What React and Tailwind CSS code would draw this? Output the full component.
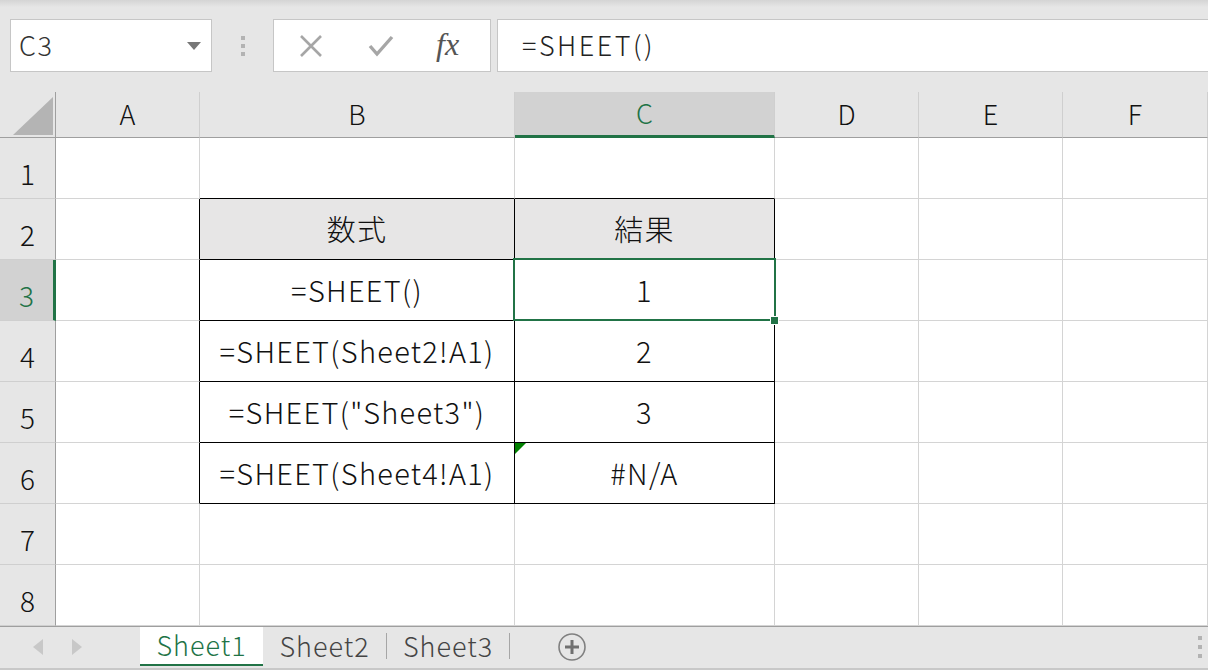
import React from 'react';

const cols = ['A', 'B', 'C', 'D', 'E', 'F'];

// table content, keyed by row number
const rows = {
    2: { B: '数式', C: '結果', head: true },
    3: { B: '=SHEET()', C: '1' },
    4: { B: '=SHEET(Sheet2!A1)', C: '2' },
    5: { B: '=SHEET("Sheet3")', C: '3' },
    6: { B: '=SHEET(Sheet4!A1)', C: '#N/A', error: true },
};

const inTable = (col, row) => (col === 'B' || col === 'C') && row >= 2 && row <= 6;

const Cell = ({ col, row }) => {
    const data = rows[row];
    const text = data && data[col];
    // right border is black if this cell or the one to the right is part of the table
    const rightBlack = inTable(col, row) || (col === 'A' && row >= 2 && row <= 6);
    const bottomBlack = inTable(col, row) || ((col === 'B' || col === 'C') && row === 1);
    const selected = col === 'C' && row === 3;

    return (
        <div
            className={`relative flex items-center justify-center border-r border-b text-[29px] font-light tracking-[1.3px] text-[#111] ${
                rightBlack ? 'border-r-black' : 'border-r-[#d4d4d4]'
            } ${bottomBlack ? 'border-b-black' : 'border-b-[#d4d4d4]'} ${
                data?.head && inTable(col, row) ? 'bg-[#e7e6e6]' : 'bg-white'
            }`}
        >
            {text && <span className="leading-none pb-[2px]">{text}</span>}
            {selected && (
                <>
                    <div className="absolute z-10 -top-[2px] -left-[2px] right-[-2px] bottom-[-1px] border-2 border-[#217346]"></div>
                    <div className="absolute z-10 -right-[5px] -bottom-[5px] w-[7px] h-[7px] bg-[#217346] border border-white box-content"></div>
                </>
            )}
            {data?.error && col === 'C' && (
                <svg className="absolute top-0 left-0" width="11" height="11" viewBox="0 0 11 11">
                    <polygon points="0,0 11,0 0,11" fill="#008000" />
                </svg>
            )}
        </div>
    );
};

const App = () => {
    return (
        <div
            className="w-[1208px] h-[670px] bg-[#e6e6e6] flex flex-col overflow-hidden"
            style={{ fontFamily: '"Noto Sans CJK JP", "Noto Sans", sans-serif' }}
        >
            {/* top edge of the ribbon */}
            <div className="h-[7px] bg-gradient-to-b from-[#d4d4d4] to-[#e6e6e6]"></div>

            {/* formula bar */}
            <div className="h-[85px] flex items-start pt-[12px] pl-[10px]">
                <div className="w-[202px] h-[53px] bg-white border border-[#c6c6c6] flex items-center justify-between pl-[8px] pr-[10px]">
                    <span className="text-[27px] font-light tracking-[1.5px] text-[#333]">C3</span>
                    <svg width="14" height="8" viewBox="0 0 14 8">
                        <polygon points="0,0 14,0 7,8" fill="#777" />
                    </svg>
                </div>
                <div className="w-[61px] h-[53px] flex flex-col items-center justify-center gap-[4px]">
                    <span className="w-[4px] h-[4px] bg-[#b3b3b3]"></span>
                    <span className="w-[4px] h-[4px] bg-[#b3b3b3]"></span>
                    <span className="w-[4px] h-[4px] bg-[#b3b3b3]"></span>
                </div>
                <div className="w-[218px] h-[53px] bg-white border border-[#c6c6c6] flex items-center">
                    <svg className="ml-[25px]" width="24" height="24" viewBox="0 0 24 24">
                        <path d="M2 2 L22 22 M22 2 L2 22" stroke="#a6a6a6" strokeWidth="2.6" fill="none" />
                    </svg>
                    <svg className="ml-[45px]" width="26" height="24" viewBox="0 0 26 24">
                        <path d="M2 12 L9 20 L24 3" stroke="#a6a6a6" strokeWidth="3.4" fill="none" />
                    </svg>
                    <span
                        className="ml-[42px] text-[32px] italic text-[#555] leading-none pb-[4px]"
                        style={{ fontFamily: '"Liberation Serif", serif' }}
                    >
                        fx
                    </span>
                </div>
                <div className="ml-[6px] flex-1 h-[53px] bg-white border border-[#c6c6c6] border-r-0 flex items-center pl-[24px]">
                    <span className="text-[27px] font-light tracking-[2.5px] text-[#222]">=SHEET()</span>
                </div>
            </div>

            {/* sheet grid */}
            <div className="grid grid-cols-[56px_144px_315px_260px_144px_144px_145px] grid-rows-[46px_repeat(8,61px)] border-r-2 border-dashed border-r-[#b0b0b0]">
                <div className="relative bg-[#e6e6e6] border-r border-b border-[#9f9f9f]">
                    <svg className="absolute left-[13px] top-[5px]" width="40" height="38" viewBox="0 0 40 38">
                        <polygon points="40,0 40,38 0,38" fill="#b4b4b4" />
                    </svg>
                </div>
                {cols.map((c) => (
                    <div
                        key={c}
                        className={`flex items-center justify-center text-[27px] font-light border-r border-r-[#cfcfcf] ${
                            c === 'C'
                                ? 'bg-[#d2d2d2] text-[#217346] border-b-[3px] border-b-[#217346]'
                                : 'bg-[#e6e6e6] text-[#111] border-b border-b-[#9f9f9f]'
                        }`}
                    >
                        {c}
                    </div>
                ))}
                {[1, 2, 3, 4, 5, 6, 7, 8].map((r) => (
                    <React.Fragment key={r}>
                        <div
                            className={`flex items-center justify-center pt-[10px] text-[28px] font-light border-b border-b-[#cfcfcf] ${
                                r === 3
                                    ? 'bg-[#d2d2d2] text-[#217346] border-r-[3px] border-r-[#217346]'
                                    : 'bg-[#e6e6e6] text-[#111] border-r border-r-[#9f9f9f]'
                            }`}
                        >
                            {r}
                        </div>
                        {cols.map((c) => (
                            <Cell key={c} col={c} row={r} />
                        ))}
                    </React.Fragment>
                ))}
            </div>

            {/* sheet tabs */}
            <div className="flex-1 flex items-start border-t border-[#9f9f9f] border-b-2 border-b-[#c8c8c8] relative">
                <div className="w-[140px] h-[40px] flex items-center pl-[33px] gap-[29px]">
                    <svg width="10" height="16" viewBox="0 0 10 16">
                        <polygon points="10,0 10,16 0,8" fill="#c8c8c8" />
                    </svg>
                    <svg width="10" height="16" viewBox="0 0 10 16">
                        <polygon points="0,0 0,16 10,8" fill="#c8c8c8" />
                    </svg>
                </div>
                <div className="w-[123px] h-[39px] bg-white border-b-2 border-[#217346] flex items-center justify-center text-[27px] font-light tracking-[1px] text-[#217346]">
                    Sheet1
                </div>
                <div className="w-[123px] h-[39px] flex items-center justify-center text-[27px] font-light tracking-[1px] text-[#444]">
                    Sheet2
                </div>
                <div className="w-px h-[26px] mt-[6px] bg-[#a6a6a6]"></div>
                <div className="w-[122px] h-[39px] flex items-center justify-center text-[27px] font-light tracking-[1px] text-[#444]">
                    Sheet3
                </div>
                <div className="w-px h-[26px] mt-[6px] bg-[#a6a6a6]"></div>
                <div className="ml-[47px] h-[40px] flex items-center">
                    <svg width="30" height="30" viewBox="0 0 30 30">
                        <circle cx="15" cy="15" r="13" stroke="#808080" strokeWidth="1.6" fill="none" />
                        <path d="M15 8 V22 M8 15 H22" stroke="#707070" strokeWidth="3" />
                    </svg>
                </div>
                <div className="ml-auto mr-[6px] h-[40px] flex flex-col justify-center gap-[5px]">
                    <span className="w-[4px] h-[4px] bg-[#b3b3b3]"></span>
                    <span className="w-[4px] h-[4px] bg-[#b3b3b3]"></span>
                    <span className="w-[4px] h-[4px] bg-[#b3b3b3]"></span>
                </div>
            </div>
        </div>
    );
};

export default App;
